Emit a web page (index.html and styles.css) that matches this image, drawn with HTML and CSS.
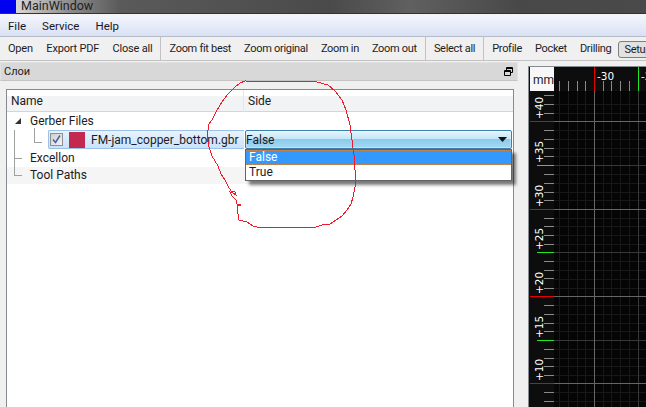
FILE: index.html
```html
<!DOCTYPE html>
<html lang="en">
<head>
<meta charset="utf-8">
<title>MainWindow</title>
<link rel="stylesheet" href="styles.css">
</head>
<body>
<div class="window">
  <header class="titlebar"><span class="app-icon"></span><span class="title-text">MainWindow</span></header>
  <nav class="menubar"><span>File</span><span>Service</span><span>Help</span></nav>
  <div class="toolbar">
    <div class="tool-group tool-file"><span>Open</span><span>Export PDF</span><span>Close all</span></div>
    <div class="tool-group"><span>Zoom fit best</span><span>Zoom original</span><span>Zoom in</span><span>Zoom out</span></div>
    <div class="tool-group"><span>Select all</span></div>
    <div class="tool-group"><span>Profile</span><span>Pocket</span><span>Drilling</span><span class="tool-active">Setup</span></div>
  </div>
  <main class="workspace">
    <section class="dock">
      <div class="dock-title"><span>Слои</span>
        <svg class="float-icon" width="9" height="9" viewBox="0 0 9 9"><path d="M2.500 3V.5h6v5H6.500M.5 3.500h6v5h-6zM.5 4.500h6M2.500 1.500h6" fill="none" stroke="#000"/></svg>
      </div>
      <div class="tree">
        <div class="tree-head"><span class="col-name">Name</span><span class="col-side">Side</span></div>
        <div class="tree-row row-group">
          <svg class="arrow" width="7" height="7" viewBox="0 0 7 7"><path d="M6 0v6H0z" fill="#333"/></svg>
          <span>Gerber Files</span>
        </div>
        <div class="tree-row row-file">
          <span class="branch branch-file"></span>
          <div class="file-item">
            <span class="check"><svg width="9" height="9" viewBox="0 0 9 9"><path d="M1 4.500l2.500 3L8 .5" fill="none" stroke="#4a66a8" stroke-width="1.600"/></svg></span>
            <span class="swatch"></span>
            <span>FM-jam_copper_bottom.gbr</span>
          </div>
          <div class="combo"><span>False</span><svg width="9" height="5" viewBox="0 0 9 5"><path d="M0 0h9L4.500 5z" fill="#111"/></svg></div>
        </div>
        <div class="tree-row row-top"><span class="branch"></span><span>Excellon</span></div>
        <div class="tree-row row-alt"><span class="branch"></span><span>Tool Paths</span></div>
        <div class="popup">
          <div class="popup-item popup-selected">False</div>
          <div class="popup-item">True</div>
        </div>
      </div>
    </section>
    <section class="viewer">
      <svg class="plot" width="118" height="341" viewBox="528 66 118 341" font-family="'DejaVu Sans', sans-serif" font-size="10.500">
        <rect x="528" y="66" width="118" height="341" fill="#868a91"/>
        <rect x="529" y="67" width="117" height="340" fill="#050505"/>
        <rect x="529" y="67" width="25" height="340" fill="#0d0d0d"/>
        <rect x="554" y="67" width="92" height="24" fill="#0d0d0d"/>
        <g stroke="#181818">
          <path d="M559.500 91v316M568.500 91v316M577.500 91v316M585.500 91v316M603.500 91v316M611.500 91v316M620.500 91v316M629.500 91v316"/>
          <path d="M554 104.500h92M554 113.500h92M554 130.500h92M554 139.500h92M554 148.500h92M554 156.500h92M554 174.500h92M554 183.500h92M554 192.500h92M554 200.500h92M554 218.500h92M554 226.500h92M554 235.500h92M554 244.500h92M554 261.500h92M554 270.500h92M554 279.500h92M554 288.500h92M554 305.500h92M554 314.500h92M554 323.500h92M554 331.500h92M554 349.500h92M554 358.500h92M554 366.500h92M554 375.500h92M554 392.500h92M554 401.500h92"/>
        </g>
        <g stroke="#383838">
          <path d="M638.500 91v316M554 165.500h92M554 252.500h92M554 340.500h92"/>
        </g>
        <g stroke="#666">
          <path d="M594.500 91v316M554 121.500h92M554 209.500h92M554 296.500h92M554 383.500h92"/>
        </g>
        <g stroke="#8a8a8a">
          <path d="M559.500 81v10M568.500 81v10M577.500 81v10M585.500 81v10M603.500 81v10M611.500 81v10M620.500 81v10M629.500 81v10"/>
          <path d="M544 95.500h10M544 104.500h10M544 113.500h10M544 130.500h10M544 139.500h10M544 148.500h10M544 156.500h10M544 174.500h10M544 183.500h10M544 192.500h10M544 200.500h10M544 218.500h10M544 226.500h10M544 235.500h10M544 244.500h10M544 261.500h10M544 270.500h10M544 278.500h10M544 288.500h10M544 305.500h10M544 314.500h10M544 323.500h10M544 331.500h10M544 349.500h10M544 358.500h10M544 366.500h10M544 375.500h10M544 392.500h10M544 401.500h10"/>
        </g>
        <path d="M594.500 67v24" stroke="#e60000"/>
        <path d="M638.500 67v24" stroke="#22e622"/>
        <path d="M530 121.500h24M530 209.500h24M530 296.500h24M530 383.500h24" stroke="#e60000"/>
        <path d="M537 165.500h17M537 252.500h17M537 340.500h17" stroke="#22e622"/>
        <rect x="530" y="67" width="24" height="24" fill="#f7f7f7"/>
        <text x="533" y="84" class="mm">mm</text>
        <g fill="#fff">
          <text x="597" y="80">-30</text>
          <text x="641" y="80">-25</text>
          <text transform="translate(543 119) rotate(-90)">+40</text>
          <text transform="translate(543 163) rotate(-90)">+35</text>
          <text transform="translate(543 207) rotate(-90)">+30</text>
          <text transform="translate(543 250) rotate(-90)">+25</text>
          <text transform="translate(543 294) rotate(-90)">+20</text>
          <text transform="translate(543 338) rotate(-90)">+15</text>
          <text transform="translate(543 381) rotate(-90)">+10</text>
        </g>
      </svg>
    </section>
  </main>
  <svg class="scribble" width="646" height="407" viewBox="0 0 646 407">
    <path d="M212 120L209 124L208 130L207 137L209 147L212 156L218 166L221 174L225 180L228 186L231 191L235 192L236 195L233 193L230 192L232 196L236 200L237 204L241 205L237 205L238 214L239 220L243 221L247 222L253 226L257 227L316 227L322 225L330 224L336 220L342 216L347 210L351 204L353 197L355 187L355 170L354 155L352 140L350 125L346 110L342 100L335 91L328 85L317 82L245 81L240 83L235 87L228 94L222 102L217 110L212 120" fill="none" stroke="#ee1c2a" shape-rendering="crispEdges"/>
  </svg>
</div>
</body>
</html>
```
FILE: styles.css
```css
* { box-sizing: border-box; }
html, body { margin: 0; padding: 0; }
body {
  width: 646px;
  height: 407px;
  overflow: hidden;
  background: #f0f0f0;
  color: #1c1c24;
  font: 12px/16px Roboto, "Open Sans", sans-serif;
}
.window { position: relative; width: 646px; height: 407px; display: flex; flex-direction: column; overflow: hidden; }
.titlebar {
  height: 16px;
  flex: none;
  display: flex;
  background: linear-gradient(90deg, #d8d8d8 16px, #8c8c8c 70px, #5a5a5a 120px, #4a4a4a 330px, #606060 410px, #484848 520px, #4a4a4a 646px);
  border-bottom: 2px solid #f4f4f4;
  box-shadow: inset 0 -1px 0 #333;
}
.app-icon { width: 16px; height: 13px; background: #0000f0; }
.title-text { margin-left: 5px; line-height: 11px; font-size: 12.500px; color: #222; }
.menubar {
  height: 21px;
  flex: none;
  display: flex;
  align-items: center;
  gap: 16px;
  padding-left: 8px;
  background: linear-gradient(#f3f5fc, #d9e1f3);
  border-bottom: 1px solid #b4bccb;
  color: #1c1624;
  font-size: 11.500px;
}
.toolbar {
  height: 24px;
  flex: none;
  display: flex;
  background: #f0f0f0;
  border-bottom: 1px solid #c2c2c2;
  white-space: nowrap;
  overflow: hidden;
  font-size: 11px;
  letter-spacing: -.3px;
}
.tool-group {
  display: flex;
  align-items: center;
  gap: 13px;
  padding: 0 8px;
  border-right: 1px solid #c2c2c2;
}
.tool-file { gap: 13.500px; letter-spacing: -.2px; }
.tool-group:last-child { border-right: 0; padding-right: 0; }
.tool-active {
  margin: 1px 0 0 -6px;
  padding: 0 10px 0 5px;
  height: 17px;
  border: 1px solid #7e7e7e;
  border-radius: 3px;
  background: #e2e2e2;
}
.workspace { flex: 1; display: flex; min-height: 0; }
.dock { width: 518px; flex: none; padding-top: 1px; }
.dock-title {
  height: 19px;
  display: flex;
  align-items: center;
  justify-content: space-between;
  padding: 0 3px;
  background: #d8d8d8;
  border: 1px solid #e2e2e2;
  border-bottom-color: #c4c4c4;
  font-size: 11px;
}
.float-icon { margin-right: 1px; }
.tree {
  position: relative;
  margin: 8px 0 0 6px;
  width: 508px;
  height: 319px;
  background: #fff;
  border: 1px solid #868a91;
  border-bottom: 0;
}
.tree-head {
  height: 22px;
  display: flex;
  align-items: center;
  background: linear-gradient(#fff 30%, #f2f3f5 30%, #f2f3f5);
  border-bottom: 1px solid #d5d5d5;
}
.col-name { width: 237px; padding-left: 4px; border-right: 1px solid #e6e6e6; line-height: 22px; }
.col-side { padding-left: 4px; }
.tree-row { display: flex; align-items: center; height: 17px; padding: 0 0 2px 23px; position: relative; }
.row-group { margin-top: 1px; }
.arrow { position: absolute; left: 8px; top: 5px; }
.row-file { height: 20px; }
.row-alt { background: #f5f5f5; }
.branch {
  position: absolute;
  left: 7px;
  top: -8px;
  width: 8px;
  height: 17px;
  border-left: 1px solid #a0a0a0;
  border-bottom: 1px solid #a0a0a0;
}
.branch-file { left: 27px; top: -2px; width: 8px; height: 15px; }
.row-file::before {
  content: "";
  position: absolute;
  left: 7px;
  top: 0;
  height: 20px;
  border-left: 1px solid #a0a0a0;
}
.file-item {
  position: absolute;
  left: 41px;
  top: 0;
  width: 196px;
  height: 19px;
  display: flex;
  align-items: center;
  padding-left: 1px;
  background: linear-gradient(#e8f3fd, #c9e2fb);
  border: 1px solid #9cc0e6;
  border-radius: 2px 0 0 2px;
  border-right: 0;
}
.check {
  width: 13px;
  height: 13px;
  display: flex;
  align-items: center;
  justify-content: center;
  background: linear-gradient(135deg, #cfcfcf, #f4f4f4);
  border: 1px solid #8e8f8f;
}
.swatch { width: 16px; height: 16px; margin: 0 6px 0 6px; background: #c3294f; }
.combo {
  position: absolute;
  left: 238px;
  top: 0;
  width: 267px;
  height: 19px;
  display: flex;
  align-items: center;
  justify-content: space-between;
  padding: 0 4px 0 0;
  background: linear-gradient(#e6f5fd 0, #c4e6f8 45%, #8ccbec 50%, #a5d8f2 100%);
  border: 1px solid #3c7fb1;
  border-radius: 2px;
  box-shadow: inset 0 0 0 1px rgba(255,255,255,.3);
}
.popup {
  position: absolute;
  left: 238px;
  top: 59px;
  width: 267px;
  height: 32px;
  background: #fff;
  border: 1px solid #646464;
  box-shadow: 4px 4px 3px rgba(0,0,0,.5);
}
.popup-item { height: 15px; line-height: 14px; padding-left: 3px; }
.popup-selected {
  color: #fff;
  background:
    repeating-linear-gradient(90deg, #c88a50 0 1px, #3399ff 1px 2px) top / 100% 1px no-repeat,
    repeating-linear-gradient(90deg, #c88a50 0 1px, #3399ff 1px 2px) bottom / 100% 1px no-repeat,
    #3399ff;
}
.viewer { flex: 1; padding: 5px 0 0 10px; min-width: 0; }
.plot { display: block; }
.mm { font-family: Roboto, sans-serif; font-size: 12px; fill: #222; }
.scribble { position: absolute; left: 0; top: 0; pointer-events: none; }
```
